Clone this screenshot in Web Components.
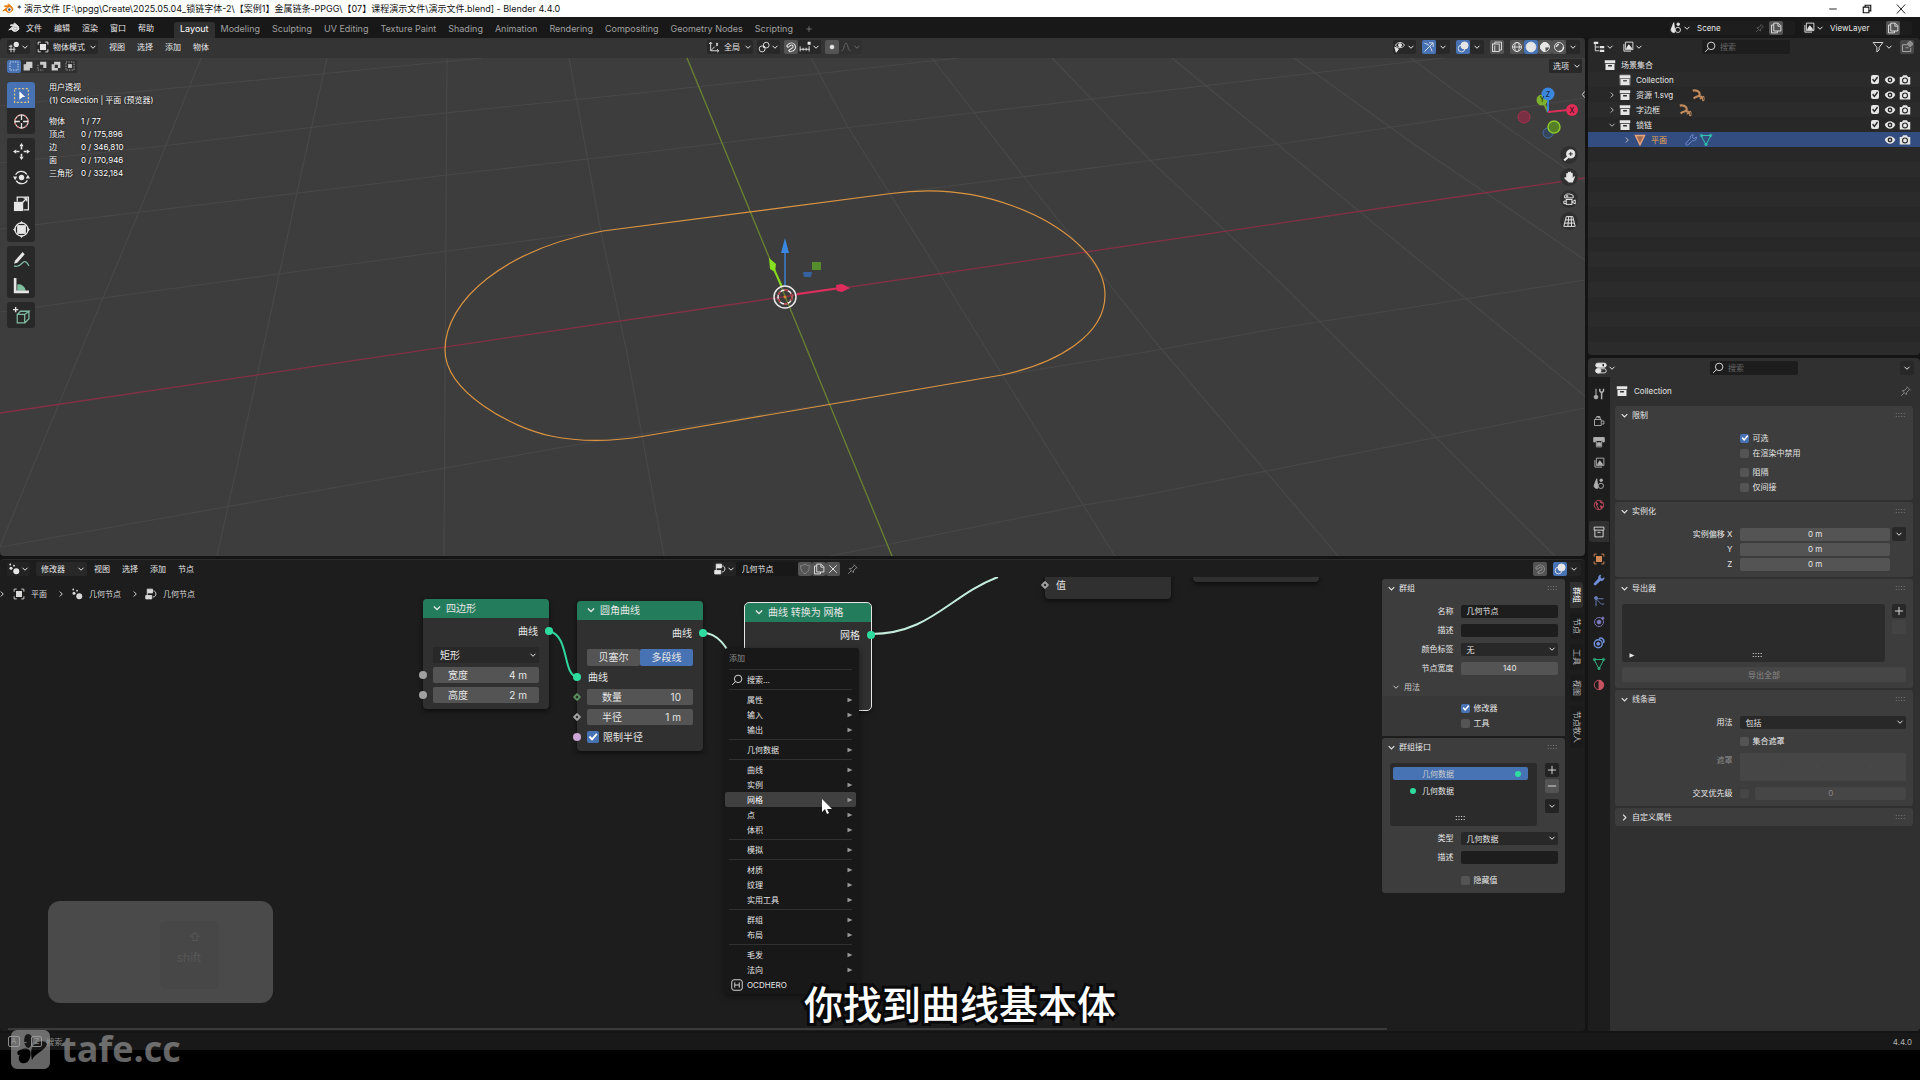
<!DOCTYPE html>
<html lang="zh-CN">
<head>
<meta charset="utf-8">
<title>演示文件.blend - Blender 4.4.0</title>
<style>
    body {
        margin: 0;
        background: #000;
        color: #e6e6e6;
        font: 8px/14px Inter, "Noto Sans CJK SC", sans-serif;
    }
</style>
</head>
<body>
<blender-app></blender-app>

<script>
const ICONS = {
    'blender': '<path d="M1 10.500 8 5H3.500V3.800H9L7.500 2.500 9 1.500l5 4.500a5 4.500 0 1 1-9 4H3z" fill="currentColor"/><circle cx="9.800" cy="8.800" r="2.800" fill="#181818"/><circle cx="9.800" cy="8.800" r="1.600" fill="currentColor"/>',
    'blender-color': '<path d="M1 10.500 8 5H3.500V3.800H9L7.500 2.500 9 1.500l5 4.500a5 4.500 0 1 1-9 4H3z" fill="#e87d0d" stroke="#e87d0d"/><circle cx="9.800" cy="8.800" r="3" fill="#fff" stroke="none"/><circle cx="9.800" cy="8.800" r="1.700" fill="#265787" stroke="none"/>',
    'down': '<path d="m3 5.500 5 5 5-5" stroke-width="2"/>',
    'right': '<path d="m5.500 3 5 5-5 5" stroke-width="2"/>',
    'left': '<path d="m10.500 1-5 7 5 7" stroke-width="2"/>',
    'play': '<path d="M3 3.500 13 8 3 12.500z" fill="currentColor" stroke="none"/>',
    'view3d': '<path d="M1 11h9M4 5v10M1 7h5M8 8v7"/><circle cx="11" cy="4.500" r="3.500" fill="currentColor" stroke="none"/>',
    'object': '<path d="M1.500 5V1.500H5M11 1.500h3.500V5M14.500 11v3.500H11M5 14.500H1.500V11"/><rect x="4" y="4" width="8" height="8" fill="currentColor" stroke="none"/>',
    'axes': '<path d="M3.500 2v11H14M1.500 4l2-2.500 2 2.500M12 11l2.500 2-2.500 2M3.500 13 9 7.500M11 2.500l2 4M13 2.500l-2 4"/>',
    'pivot': '<circle cx="5.500" cy="10.500" r="4"/><circle cx="11" cy="5.500" r="3.800"/><circle cx="8" cy="8" r="1" fill="currentColor"/>',
    'magnet': '<path d="M2 6.500 6 3.200A5.200 5.200 0 1 1 11 13l-4.500 1.500M2 6.500l2 2 4-3c2-1 4 2 2 3.500l-5 3.500 1.500 2" stroke-width="1.400"/>',
    'snap': '<path d="M1.500 7v7M5.500 9v4M9.500 9v4M13.500 7v7M1 11h13"/><rect x="11.500" y="1" width="4" height="4" fill="currentColor" stroke="none"/>',
    'dot': '<circle cx="8" cy="8" r="2.500" fill="currentColor"/>',
    'falloff': '<path d="M2 13c4 0 3-10 6-10s2 10 6 10"/>',
    'eye-cursor': '<path d="M2 5.500C4.500 1 11.500 1 14 5.500 11.500 10 4.500 10 2 5.500z"/><circle cx="8" cy="5.500" r="2" fill="currentColor"/><path d="m1 8 5 2.500-3 4.500z" fill="currentColor"/>',
    'gizmo': '<path d="M2 14 13 3M8 2.500h5.500V8M2 3c5 1 9 5 10 11"/>',
    'overlay': '<circle cx="10" cy="6" r="4.800" fill="currentColor"/><circle cx="6" cy="10" r="4.500"/>',
    'xray': '<rect x="2" y="4" width="9" height="10"/><path d="M5 4V1.500h9V12h-3M5 6v8" />',
    'wire': '<circle cx="8" cy="8" r="6"/><ellipse cx="8" cy="8" rx="3" ry="6"/><path d="M2 8h12"/>',
    'solid': '<circle cx="8" cy="8" r="6.500" fill="currentColor"/>',
    'matprev': '<circle cx="8" cy="8" r="6"/><path d="M8 2a6 6 0 0 0 0 12V8h5A6 6 0 0 0 8 2z" fill="currentColor"/>',
    'rendered': '<circle cx="8" cy="8" r="6"/><path d="M4.500 8A4 4 0 0 1 8 4.500" stroke-width="2"/><path d="M14 8a6 6 0 0 1-6 6" stroke-width="2"/>',
    'sel-new': '<rect x="1.500" y="1.500" width="13" height="13" stroke-dasharray="2 2"/>',
    'sel-add': '<path d="M5 1h10v10h-4v4H1V5h4z" fill="currentColor" stroke="none"/>',
    'sel-sub': '<path d="M5 1h10v10h-5V6H5z" fill="currentColor" stroke="none"/><path d="M1.500 6v8.500H10" stroke-dasharray="2 2"/>',
    'sel-inv': '<path fill-rule="evenodd" d="M5 1h10v10h-4v4H1V5h4zM6 6v5h5V6z" fill="currentColor" stroke="none"/>',
    'sel-and': '<rect x="5" y="5" width="6" height="6" fill="currentColor" stroke="none"/><rect x="1.500" y="1.500" width="13" height="13" stroke-dasharray="2 2"/>',
    't-select': '<rect x="1.500" y="1.500" width="13" height="13" stroke="#d9c28a" stroke-dasharray="2 1.500"/><path d="m6 4 5.500 5.500H9L6 12z" fill="#fff" stroke="none"/>',
    't-cursor': '<circle cx="8" cy="8" r="6.200"/><circle cx="8" cy="8" r="6.200" stroke="#c66" stroke-dasharray="2 2"/><path d="M8 1.500v5M8 9.500v5M1.500 8h5M9.500 8h5"/>',
    't-move': '<path d="M8 0 6 3h4zM8 16l-2-3h4zM0 8l3-2v4zM16 8l-3-2v4z" fill="currentColor" stroke="none"/><path d="M8 3v3M8 10v3M3 8h3M10 8h3" stroke-width="1.500"/>',
    't-rotate': '<circle cx="8" cy="8" r="2" fill="currentColor"/><path d="M2.500 5.500A6 6 0 0 1 13 5M13.500 10.500A6 6 0 0 1 3 11"/><path d="M0 7h4l-2 3.500zM16 9h-4l2-3.500z" fill="currentColor" stroke="none"/>',
    't-scale': '<path d="M4 6V2h10.500v12H10"/><path d="m9 7 4-4M10 3h3v3"/><rect x="1.500" y="7" width="7.500" height="7.500" fill="currentColor"/>',
    't-transform': '<circle cx="8" cy="8" r="6.200"/><rect x="4.500" y="4.500" width="7" height="7" fill="currentColor"/><path d="M8 0 6 2.500h4zM8 16l-2-2.500h4zM0 8l2.500-2v4zM16 8l-2.500-2v4z" fill="currentColor" stroke="none"/>',
    't-annotate': '<path d="m2 9 7-8 2 2-7 8-3 1z" fill="currentColor" stroke="none"/><path d="M1 14c4 2 6-1 8-3s4-1 6 3" stroke="#7fb8a0"/>',
    't-measure': '<path d="M4 13V7a7 7 0 0 1 8 6z" fill="#7fc0a0" stroke="none"/><path d="M2 1v13h13" stroke-width="2.500"/>',
    't-cube': '<path d="M4 7h7v8H4zM4 7l3-3h8l-4 3M15 4v7l-4 4" stroke="#7fb8a0"/><path d="M2.500 0v5M0 2.500h5" stroke-width="1.300"/>',
    'zoom': '<circle cx="9.500" cy="6" r="5" fill="currentColor"/><path d="m6 10-4.500 4" stroke-width="2.500"/><path d="M9.500 3.500v5M7 6h5" stroke="#303030"/>',
    'hand': '<path d="M4 8V3.500a1 1 0 0 1 2 0V2a1 1 0 0 1 2 0v-.5a1 1 0 0 1 2 0V3a1 1 0 0 1 2 0v6l1-2c1-1 2 0 1.500 1L12 14H7L2 9.500C1 8 2.500 7 4 8z" fill="currentColor" stroke="none"/>',
    'camview': '<path d="M2 6V3.500C4 0 9 1 12.500 3v3z"/><circle cx="5" cy="4" r="1"/><rect x="4" y="8" width="7" height="6"/><path d="m11 11 4-2.500v5zM4 10H1v3h3"/>',
    'persp': '<path d="M4 2h8l3 12H1zM3 6h10M2 10h12M7 2 6 14M10 2l.5 12"/>',
    'scene': '<path d="M5 1 1.500 10a3.500 3.500 0 0 0 5 3.500z" fill="currentColor"/><circle cx="10.500" cy="10.500" r="3.500"/><circle cx="11" cy="3" r="1.700" fill="currentColor"/>',
    'pin': '<path d="m9 2 5 5M10 3 6.500 7 3 7.500 8.500 13l.5-3.500L13 6M5.500 10.500 1.500 14.500"/>',
    'copy': '<path d="M5 1.500h6l3.500 3.500v7H5zM10.500 2v3.500H14"/><path d="M5 4H2v10.500h8V12"/>',
    'image': '<path d="M4.500 1.500h10v10h-10z"/><path d="m6 10 3-5 4 5z" fill="currentColor"/><path d="M2.500 4v9.500H12"/>',
    'outliner': '<path d="M3 3v10h5M3 8h5" /><path d="M1 1h6v3H1zM9 6.500h6v3H9zM9 11.500h6v3H9z" fill="currentColor" stroke="none"/>',
    'search': '<circle cx="9.500" cy="6.500" r="5"/><path d="m6 10-4.500 4.500"/>',
    'filter': '<path d="M1.500 2h13l-5 6.500V12l-3 2.500v-6z"/>',
    'newcol': '<path d="M2 5h6M2 5v9h11V9M6 9h4" /><circle cx="12" cy="4" r="3"/><path d="M12 0v8M8 4h8"/>',
    'collection': '<path d="M1 1.500h14v4H1zM2 6.500h12v8H2zM5.500 8v2h5V8z" fill-rule="evenodd" fill="currentColor" stroke="none"/>',
    'collection-line': '<path d="M1.500 1.500h13v4h-13zM2.500 5.500v9h11v-9M6 8.500h4"/>',
    'curve': '<path d="M2 3c4-1 8 1 8 4S6 9 3 12" stroke-width="2.500"/><path d="M9 10c4-2 5 2 1 2" stroke-width="2"/><ellipse cx="14" cy="12" rx="1" ry="2.500"/>',
    'mesh': '<path d="M1.500 2h13L8 14.500z"/><circle cx="2" cy="2" r="1.500"/><circle cx="14" cy="2" r="1.500"/><circle cx="8" cy="14" r="1.500"/>',
    'mesh-fill': '<path d="M2 2h12L8 14.500z" fill="#a06a50" stroke="#e8a27c" stroke-width="2"/>',
    'wrench': '<path d="M11 1a4 4 0 0 0-4 5L1.500 12a1.500 1.500 0 0 0 2.500 2.500L10 9a4 4 0 0 0 5-5l-2.500 2-2-.5-.5-2z" fill="currentColor" stroke="none"/>',
    'wrench-line': '<path d="M11 1a4 4 0 0 0-4 5L1.500 12a1.500 1.500 0 0 0 2.500 2.500L10 9a4 4 0 0 0 5-5l-2.500 2-2-.5-.5-2z"/>',
    'props': '<rect x="1" y="1.500" width="14" height="5.500" rx="2.700" fill="currentColor"/><rect x="1" y="9" width="14" height="5.500" rx="2.700"/><path d="M10 4.200h2" stroke="#222" stroke-width="3"/><rect x="1" y="9" width="7" height="5.500" rx="2.700" fill="currentColor"/>',
    'tool': '<path d="M4 1v8" stroke-width="1.500"/><circle cx="4" cy="12" r="2.500" fill="currentColor"/><path d="M9 1v3l2.500 2.500L14 4V1M11.500 6v9" stroke-width="2"/>',
    'render': '<path d="M2 6h9v8H2zM3 6l2-4h4l1 4M12 8h2.500v4H12"/><path d="M6 3h3" stroke-width="2"/>',
    'output': '<path d="M1 2h14v6h-2V6H3v2H1z" fill="currentColor"/><path d="M4.500 7v7.500h7V7"/><path d="M6 9h4v4H6z" fill="currentColor"/>',
    'world': '<circle cx="8" cy="8" r="6.300"/><path d="M3 4.500c3 0 4 2 2.500 3.500S8 11 7 14M10 2.500C8 5 12 5 13.500 6M10 9l3 1-2 3z" fill="currentColor"/>',
    'particles': '<path d="M4 13V5h8M4 5l8 8"/><circle cx="4" cy="4" r="2" fill="currentColor"/><path d="M11 5h3M12 12h3M4 12v3"/>',
    'physics': '<circle cx="8" cy="8" r="6"/><circle cx="8" cy="8" r="2.500" fill="currentColor"/><circle cx="13" cy="3" r="1.500" fill="currentColor"/>',
    'constraint': '<circle cx="7" cy="9" r="5.300" stroke-width="2"/><circle cx="7" cy="9" r="2" fill="currentColor"/><path d="M8 2c4-2 8 2 6 6" stroke-width="2"/>',
    'material': '<circle cx="8" cy="8" r="6.300"/><path d="M8 2a6 6 0 0 1 6 6H8zM8 8v6A6 6 0 0 0 14 9z" fill="currentColor"/>',
    'geonodes': '<circle cx="11" cy="11" r="4" fill="currentColor" stroke="none"/><circle cx="4" cy="7" r="2" fill="currentColor" stroke="none"/><circle cx="3" cy="2" r="1.200" fill="currentColor" stroke="none"/><circle cx="8" cy="3.500" r="1.200" fill="currentColor" stroke="none"/>',
    'nodetree': '<path d="M3 1.500h7v5H3zM1 10h8v4.500H1z" fill="currentColor"/><path d="M11 4c3 0 3.500 2 3.500 4s-1 4-4 4M3 6.500V10"/>',
    'shield': '<path d="M8 1.500c2 1.500 4 2 6 2 0 6-2 9-6 11-4-2-6-5-6-11 2 0 4-.5 6-2z"/>',
    'close': '<path d="m3 3 10 10M13 3 3 13"/>',
    'plus': '<path d="M8 2.500v11M2.500 8h11"/>',
    'minus': '<path d="M2.500 8h11"/>',
    'grip': '<path d="M1 6h14M1 10h14" stroke-dasharray="1.500 2"/>',
    'eye': '<path d="M1 8c3-6.500 11-6.500 14 0-3 6.500-11 6.500-14 0z" fill="currentColor" stroke="none"/><circle cx="8" cy="8" r="3.200" fill="#282828" stroke="none"/><circle cx="8" cy="8" r="1.400" fill="currentColor" stroke="none"/>',
    'camera': '<path d="M1 4h3l1.500-2.500h5L12 4h3v10H1z" fill="currentColor" stroke="none"/><circle cx="8" cy="8.500" r="4" fill="#282828" stroke="none"/><circle cx="8" cy="8.500" r="2.500" fill="currentColor" stroke="none"/>',
    'hero': '<rect x="1" y="1" width="14" height="14" rx="3"/><path d="M5 4.500v7M11 4.500v7M5 8h6"/>',
    'win-min': '<path d="M3 8h10"/>',
    'win-max': '<path d="M3 5.500h7.500V13H3zM5.500 5.500V3H13v7.500h-2.500" stroke-width="1.500"/>',
    'win-close': '<path d="m2.500 2 11 12M13.500 2l-11 12"/>'
};

const BASE = `
    * { box-sizing: border-box; }
    button, input, select {
        font: inherit; color: inherit; border: 0; padding: 0; margin: 0;
        background: none; border-radius: 2px; min-width: 0;
    }
    select { appearance: none; }
    input[type=checkbox] {
        appearance: none; width: 9px; height: 9px; flex: none;
        background: #545454; display: block;
    }
    input[type=checkbox]:checked { background: #4772b3; }
    input[type=checkbox]:checked::before {
        content: ""; display: block; width: 100%; height: 100%; background: #fff;
        clip-path: polygon(14% 52%, 26% 40%, 42% 58%, 76% 18%, 88% 30%, 42% 82%);
    }
`;

class UiElement extends HTMLElement {
    constructor() {
        super();
        this.attachShadow({ mode: 'open' });
    }

    connectedCallback() {
        this.shadowRoot.innerHTML = `<style>${BASE}${this.styles()}</style>${this.view()}`;
    }

    attr(name, fallback = '') {
        return this.getAttribute(name) || fallback;
    }

    styles() { return ''; }
    view() { return '<slot></slot>'; }
}

class UiIcon extends UiElement {
    styles() {
        return `
            :host { display: block; flex: none; width: 12px; height: 12px; }
            svg { display: block; width: 100%; height: 100%; overflow: visible; }
        `;
    }
    view() {
        return `<svg viewBox="0 0 16 16" fill="none" stroke="currentColor" stroke-width="1.200" aria-hidden="true">${ICONS[this.attr('name')] || ''}</svg>`;
    }
}
customElements.define('ui-icon', UiIcon);

// Small header button: icon, optional text, optional drop arrow.
class UiButton extends UiElement {
    styles() {
        return `
            :host { display: block; flex: none; }
            button {
                display: flex; align-items: center; gap: 1px;
                height: 14px; min-width: 14px; padding: 0 1px;
                justify-content: center; background: var(--btn, #282828); white-space: nowrap;
            }
            :host([kind=on]) button { background: #4772b3; }
            :host([kind=lit]) button { background: #545454; }
            :host([kind=flat]) button { background: none; }
            :host([dim]) { color: #888; }
            span { margin: 0 3px; }
            .drop { width: 8px; height: 8px; }
        `;
    }
    view() {
        const icon = this.attr('icon');
        const text = this.attr('text');
        return `<button type="button" aria-label="${this.attr('label', text || icon)}">
            ${icon ? `<ui-icon name="${icon}"></ui-icon>` : ''}
            ${text ? `<span>${text}</span>` : ''}
            ${this.hasAttribute('drop') ? '<ui-icon class="drop" name="down"></ui-icon>' : ''}
        </button>`;
    }
}
customElements.define('ui-button', UiButton);

class UiMenus extends UiElement {
    styles() {
        return `
            :host { display: flex; gap: 12px; }
            button { height: 14px; white-space: nowrap; }
        `;
    }
    view() {
        return this.attr('items').split(',').map((t) => `<button type="button">${t}</button>`).join('');
    }
}
customElements.define('ui-menus', UiMenus);

class UiSearch extends UiElement {
    styles() {
        return `
            :host { display: flex; align-items: center; gap: 4px; width: 88px; height: 14px; padding: 0 2px; background: #1d1d1d; border-radius: 2px; }
            input { flex: 1; height: 14px; }
            input::placeholder { color: #666; opacity: 1; }
        `;
    }
    view() {
        return '<ui-icon name="search"></ui-icon><input type="text" placeholder="搜索" aria-label="搜索">';
    }
}
customElements.define('ui-search', UiSearch);

class EditorHeader extends UiElement {
    styles() {
        return `
            :host { display: grid; grid-template-columns: 1fr auto 1fr; align-items: center; flex: none; }
            div { display: flex; align-items: center; gap: 6px; }
            .end { justify-content: flex-end; }
        `;
    }
    view() {
        return `
            <div><slot name="left"></slot></div>
            <div><slot name="center"></slot></div>
            <div class="end"><slot name="right"></slot></div>
        `;
    }
}
customElements.define('editor-header', EditorHeader);

class UiPanel extends UiElement {
    styles() {
        return `
            :host { display: block; background: #3d3d3d; border-radius: 3px; }
            header { display: flex; align-items: center; height: 18px; padding: 0 6px 0 5px; }
            button { display: flex; align-items: center; gap: 3px; flex: 1; }
            button ui-icon { width: 9px; height: 9px; }
            .grip { color: #777; }
            section { display: flex; flex-direction: column; gap: 5px; padding: 7px 7px 6px; }
            :host([closed]) section { display: none; }
        `;
    }
    view() {
        const closed = this.hasAttribute('closed');
        return `
            <header>
                <button type="button"><ui-icon name="${closed ? 'right' : 'down'}"></ui-icon>${this.attr('heading')}</button>
                <ui-icon class="grip" name="grip"></ui-icon>
            </header>
            <section><slot></slot></section>
        `;
    }
}
customElements.define('ui-panel', UiPanel);

// One labelled property: kind is text, number, select or check.
class UiProp extends UiElement {
    styles() {
        return `
            :host { display: grid; grid-template-columns: minmax(0, 2fr) minmax(0, 3fr); gap: 8px; height: 14px; align-items: center; }
            .name { text-align: right; white-space: nowrap; }
            .cell { display: flex; gap: 2px; align-items: center; height: 14px; position: relative; }
            .field { flex: 1; height: 13px; width: 100%; background: #1d1d1d; padding: 0 5px; }
            select.field { background: #282828; }
            .number { background: #545454; text-align: center; }
            .arrow { position: absolute; right: 2px; top: 3px; width: 8px; height: 8px; pointer-events: none; }
            .check { display: flex; align-items: center; gap: 3px; white-space: nowrap; }
            :host([dim]) .number { background: #464646; color: #888; }
        `;
    }
    view() {
        const kind = this.attr('kind', 'text');
        const label = this.attr('label');
        const value = this.attr('value');
        if (kind === 'check') {
            return `<span></span><label class="check"><input type="checkbox"${this.hasAttribute('checked') ? ' checked' : ''}>${label}</label>`;
        }
        let control = `<input id="c" class="field ${kind}" type="text" value="${value}">`;
        if (kind === 'select') {
            control = `<select id="c" class="field"><option>${value}</option></select><ui-icon class="arrow" name="down"></ui-icon>`;
        }
        return `<label class="name" for="c">${label}</label><div class="cell"><slot name="before"></slot>${control}<slot></slot></div>`;
    }
}
customElements.define('ui-prop', UiProp);

class TitleBar extends UiElement {
    styles() {
        return `
            :host {
                display: flex; align-items: center; height: 17px; padding: 0 13px 0 2px; gap: 3px;
                background: #fff; color: #111; font-size: 9px; line-height: 17px;
            }
            .name { flex: 1; white-space: nowrap; }
            nav { display: flex; gap: 22px; }
            button { width: 12px; height: 12px; }
        `;
    }
    view() {
        return `
            <ui-icon name="blender-color"></ui-icon>
            <span class="name">* 演示文件 [F:\\ppgg\\Create\\2025.05.04_锁链字体-2\\【案例1】金属链条-PPGG\\【07】课程演示文件\\演示文件.blend] - Blender 4.4.0</span>
            <nav>
                <button type="button" aria-label="最小化"><ui-icon name="win-min"></ui-icon></button>
                <button type="button" aria-label="还原"><ui-icon name="win-max"></ui-icon></button>
                <button type="button" aria-label="关闭"><ui-icon name="win-close"></ui-icon></button>
            </nav>
        `;
    }
}
customElements.define('title-bar', TitleBar);

class TopBar extends UiElement {
    styles() {
        return `
            :host { display: flex; align-items: center; height: 21px; padding: 0 8px; background: #181818; --btn: #1d1d1d; }
            ui-menus { margin: 0 20px 0 6px; }
            nav { display: flex; align-self: flex-end; flex: 1; color: #a0a0a0; font-size: 9px; }
            nav button { height: 16px; padding: 0 6px 2px; border-radius: 3px 3px 0 0; white-space: nowrap; }
            nav .on { background: #303030; color: #fff; }
            nav ui-icon { width: 8px; height: 8px; }
            .pick { display: flex; align-items: center; background: #1d1d1d; margin-left: 7px; border-radius: 2px; }
            .pick input { width: 58px; height: 14px; }
            .view input { width: 56px; }
            .pick ui-button:first-child { margin-right: 5px; }
            .pick > ui-icon { color: #666; width: 10px; height: 10px; margin-right: 4px; }
            .pad { width: 12px; }
        `;
    }
    view() {
        const tabs = ['Layout', 'Modeling', 'Sculpting', 'UV Editing', 'Texture Paint', 'Shading', 'Animation', 'Rendering', 'Compositing', 'Geometry Nodes', 'Scripting'];
        return `
            <ui-icon name="blender"></ui-icon>
            <ui-menus items="文件,编辑,渲染,窗口,帮助"></ui-menus>
            <nav>
                ${tabs.map((t, i) => `<button type="button"${i ? '' : ' class="on"'}>${t}</button>`).join('')}
                <button type="button" aria-label="添加工作区"><ui-icon name="plus"></ui-icon></button>
            </nav>
            <div class="pick">
                <ui-button icon="scene" drop></ui-button>
                <input type="text" value="Scene" aria-label="场景">
                <ui-icon name="pin"></ui-icon>
                <ui-button icon="copy" kind="lit"></ui-button>
                <span class="pad"></span>
            </div>
            <div class="pick view">
                <ui-button icon="image" drop></ui-button>
                <input type="text" value="ViewLayer" aria-label="视图层">
                <ui-button icon="copy" kind="lit"></ui-button>
                <span class="pad"></span>
            </div>
        `;
    }
}
customElements.define('top-bar', TopBar);

class ToolShelf extends UiElement {
    styles() {
        return `
            :host { display: flex; flex-direction: column; gap: 4px; width: 28px; }
            div { border-radius: 3px; overflow: hidden; background: #282828; }
            button { display: flex; width: 28px; height: 26px; align-items: center; justify-content: center; border-radius: 0; }
            button.on { background: #4772b3; }
            ui-icon { width: 17px; height: 17px; }
        `;
    }
    view() {
        const groups = [['select', 'cursor'], ['move', 'rotate', 'scale', 'transform'], ['annotate', 'measure'], ['cube']];
        return groups.map((g) => `<div>${g.map((t) =>
            `<button type="button" aria-label="${t}"${t === 'select' ? ' class="on"' : ''}><ui-icon name="t-${t}"></ui-icon></button>`).join('')}</div>`).join('');
    }
}
customElements.define('tool-shelf', ToolShelf);

class NavGizmo extends UiElement {
    styles() {
        return `
            :host { display: flex; flex-direction: column; align-items: flex-end; gap: 4px; }
            svg { width: 64px; height: 64px; display: block; margin-bottom: -2px; font: 7px Inter, sans-serif; }
            button { width: 18px; height: 18px; border-radius: 9px; background: #303030; display: grid; place-items: center; margin-right: 2px; }
            ui-icon { width: 13px; height: 13px; }
        `;
    }
    view() {
        return `
            <svg viewBox="-32 -32 64 64" text-anchor="middle">
                <circle cx="0" cy="21" r="5" fill="#35465c" stroke="#3f6ea8"/>
                <circle cx="-24" cy="5" r="6" fill="#7a2f42" stroke="#a8304c"/>
                <path d="M0 0-5-11" stroke="#7aa52a" stroke-width="2"/>
                <path d="M0 0v-16" stroke="#3b83d8" stroke-width="2"/>
                <path d="m0 0 20-2" stroke="#d8305a" stroke-width="2"/>
                <circle cx="6" cy="15" r="6" fill="#547f27" stroke="#8bc72c" stroke-width="1.500"/>
                <circle cx="-6" cy="-12" r="5.500" fill="#7db02b"/>
                <circle cx="0" cy="-18" r="6.500" fill="#3b87e0"/>
                <circle cx="24" cy="-2" r="6" fill="#e02c57"/>
                <text x="-6" y="-10" fill="#111">Y</text>
                <text x="0" y="-15" fill="#111">Z</text>
                <text x="24" y="1" fill="#111">X</text>
            </svg>
            ${['zoom', 'hand', 'camview', 'persp'].map((n) => `<button type="button" aria-label="${n}"><ui-icon name="${n}"></ui-icon></button>`).join('')}
        `;
    }
}
customElements.define('nav-gizmo', NavGizmo);

class View3d extends UiElement {
    styles() {
        return `
            :host { display: flex; flex-direction: column; position: relative; overflow: hidden; background: #3d3d3d; border-radius: 4px; }
            .scene { position: absolute; inset: 0; width: 100%; height: 100%; }
            editor-header { position: relative; height: 20px; padding: 0 5px 3px 7px; background: rgba(48, 48, 48, .7); }
            .join { display: flex; }
            .mid { padding-right: 18px; display: flex; gap: 4px; }
            .sub { position: relative; display: flex; justify-content: space-between; align-items: center; height: 16px; padding: 0 3px 0 7px; }
            .modes { display: flex; background: #303030; }
            .modes button { width: 14px; height: 13px; display: grid; place-items: center; color: #ccc; }
            .modes .on { background: #4772b3; color: #fff; }
            .modes ui-icon { width: 10px; height: 10px; }
            .body { position: relative; display: flex; padding-top: 6px; }
            tool-shelf { margin: 2px 14px 0 7px; }
            .info { flex: 1; padding-top: 1px; line-height: 13px; color: #fff; text-shadow: 0 0 2px #000; }
            dl { display: grid; grid-template-columns: 32px auto; margin: 8px 0 0; }
            dd { margin: 0; }
            .side { width: 5px; height: 14px; margin-top: 7px; display: grid; place-items: center; }
            .side ui-icon { width: 7px; height: 7px; }
        `;
    }
    view() {
        const stats = [['物体', '1 / 77'], ['顶点', '0 / 175,896'], ['边', '0 / 346,810'], ['面', '0 / 170,946'], ['三角形', '0 / 332,184']];
        return `
            <svg class="scene" viewBox="0 38 1585 518" preserveAspectRatio="xMidYMid slice" fill="none">
                <g stroke="#484848" stroke-width="1.200">
                    <path d="M0 106 82 97 310 75 482 58M0 163 155 147 347 123 640 93 815 74 958 58M0 229 447 175 640 153 844 128 1280 77 1443 58M0 312 286 273 447 251 942 187 1280 144 1585 98M0 547 400 476 575 445 1140 353 1280 328 1585 280M830 556 1084 505 1140 496 1585 408"/>
                    <path d="M201 58 141 207 80 353-4 556M327 58 296 197 261 358 217 556M447 58 444 556M569 58 600 227 627 353 664 556M811 58 848 127 942 277 993 360 1115 556M932 58 1024 177 1158 345 1338 556M1052 58 1150 160 1288 290 1555 556M1172 58 1288 153 1464 297 1585 396M1294 58 1415 145 1585 260M1411 58 1451 88 1585 182"/>
                </g>
                <path d="M0 413 1585 178" stroke="#853046" stroke-width="1.300"/>
                <path d="M687 58 892 556" stroke="#6b8330" stroke-width="1.300"/>
                <path d="M603 231 891 193.500C930 188 973 191 1013 206 1060 223 1105 257 1105 295 1105 335 1058 363 1002 375L645 436C605 443 575 441 551 436 512 428 445 392 445 350 445 300 505 249 603 231z" stroke="#dc9440" stroke-width="1.200"/>
                <path d="M785 286v-35" stroke="#3b7fd0" stroke-width="1.500"/>
                <path d="m785 238-4 15h8z" fill="#3b87e0"/>
                <path d="m782 287-9-20" stroke="#86d81f" stroke-width="2"/>
                <path d="m769 258 7 6-1 8-5-3z" fill="#86e01f"/>
                <path d="m797 294 43-6" stroke="#d9305c" stroke-width="2"/>
                <path d="m836 285 6-1 8 4-8 4-5-1z" fill="#e02c5c"/>
                <path d="M812 262h9v8h-9z" fill="#558c2c"/>
                <path d="M803 272h9l-1 5h-7z" fill="#35619e"/>
                <circle cx="785" cy="297" r="11" stroke="#e8e8e8" stroke-width="1.500"/>
                <circle cx="785" cy="297" r="7" stroke="#eee" stroke-width="1.500"/>
                <circle cx="785" cy="297" r="7" stroke="#a33" stroke-width="1.500" stroke-dasharray="4 4"/>
                <circle cx="785" cy="297" r="1.500" fill="#d98a30"/>
            </svg>
            <editor-header>
                <ui-button slot="left" icon="view3d" drop></ui-button>
                <ui-button slot="left" icon="object" text="物体模式" drop></ui-button>
                <ui-menus slot="left" items="视图,选择,添加,物体" style="margin-left:5px"></ui-menus>
                <div slot="center" class="mid">
                    <ui-button icon="axes" text="全局" drop></ui-button>
                    <ui-button icon="pivot" drop></ui-button>
                    <span class="join"><ui-button icon="magnet" kind="lit"></ui-button><ui-button icon="snap" drop></ui-button></span>
                    <span class="join"><ui-button icon="dot" kind="lit"></ui-button><ui-button icon="falloff" drop style="opacity:.3"></ui-button></span>
                </div>
                <ui-button slot="right" icon="eye-cursor" drop></ui-button>
                <span slot="right" class="join"><ui-button icon="gizmo" kind="on"></ui-button><ui-button label="控件" drop></ui-button></span>
                <span slot="right" class="join"><ui-button icon="overlay" kind="on"></ui-button><ui-button label="叠加层" drop></ui-button></span>
                <ui-button slot="right" icon="xray" kind="lit"></ui-button>
                <span slot="right" class="join">
                    <ui-button icon="wire" kind="lit"></ui-button><ui-button icon="solid" kind="on"></ui-button>
                    <ui-button icon="matprev" kind="lit"></ui-button><ui-button icon="rendered" kind="lit"></ui-button>
                    <ui-button label="着色" drop></ui-button>
                </span>
            </editor-header>
            <div class="sub">
                <div class="modes">
                    ${['new', 'add', 'sub', 'inv', 'and'].map((m) => `<button type="button" aria-label="${m}"${m === 'new' ? ' class="on"' : ''}><ui-icon name="sel-${m}"></ui-icon></button>`).join('')}
                </div>
                <ui-button text="选项" drop></ui-button>
            </div>
            <div class="body">
                <tool-shelf></tool-shelf>
                <div class="info">
                    <div>用户透视</div>
                    <div>(1) Collection | 平面 (预览器)</div>
                    <dl>${stats.map(([k, v]) => `<dt>${k}</dt><dd>${v}</dd>`).join('')}</dl>
                </div>
                <nav-gizmo></nav-gizmo>
                <button class="side" type="button" aria-label="侧栏"><ui-icon name="left"></ui-icon></button>
            </div>
        `;
    }
}
customElements.define('view-3d', View3d);

class OutlinerRow extends UiElement {
    styles() {
        const depth = Number(this.attr('depth', '0'));
        return `
            :host { display: flex; align-items: center; height: 15px; padding: 0 9px 0 ${1 + depth * 15}px; }
            :host([selected]) { background: #334d80; color: #f0a848; }
            .fold { width: 15px; display: grid; place-items: center; color: #bbb; }
            .fold ui-icon { width: 8px; height: 8px; }
            .kind { color: #e6e6e6; }
            :host([active]) .kind { background: #555; border-radius: 2px; }
            .name { margin: 0 18px 0 5px; }
            .extra { color: #c08a5c; width: 14px; height: 14px; }
            .mod { color: #6f8fd0; }
            .mesh { color: #2fd5b0; margin-left: 3px; }
            .end { margin-left: auto; display: flex; gap: 3px; align-items: center; color: #e6e6e6; }
            .end input { margin: 0 2px; width: 8px; background: #e6e6e6; }
            .end input:checked { background: #e6e6e6; }
            .end input:checked::before { background: #222; }
        `;
    }
    view() {
        const fold = this.attr('fold');
        const extra = this.attr('extra');
        const root = this.attr('depth', '0') === '0';
        const selected = this.hasAttribute('selected');
        return `
            <span class="fold">${fold ? `<ui-icon name="${fold}"></ui-icon>` : ''}</span>
            <ui-icon class="kind" name="${this.attr('icon', 'collection')}"></ui-icon>
            <span class="name">${this.attr('name')}</span>
            ${extra ? `<ui-icon class="extra" name="${extra}"></ui-icon>` : ''}
            ${selected ? '<ui-icon class="mod" name="wrench-line"></ui-icon><ui-icon class="mesh" name="mesh"></ui-icon>' : ''}
            <span class="end">
                ${root || selected ? '' : '<input type="checkbox" checked aria-label="启用">'}
                ${root ? '' : '<ui-icon name="eye"></ui-icon><ui-icon name="camera"></ui-icon>'}
            </span>
        `;
    }
}
customElements.define('outliner-row', OutlinerRow);

class OutlinerEditor extends UiElement {
    styles() {
        return `
            :host {
                display: flex; flex-direction: column; overflow: hidden; border-radius: 4px;
                background: repeating-linear-gradient(#282828 0 15px, #2b2b2b 15px 30px) 0 19px;
            }
            editor-header { height: 19px; padding: 0 6px 2px 4px; background: #282828; }
            ui-search { margin-right: 14px; }
        `;
    }
    view() {
        return `
            <editor-header>
                <ui-button slot="left" icon="outliner" drop></ui-button>
                <ui-button slot="left" icon="image" drop></ui-button>
                <ui-search slot="center"></ui-search>
                <ui-button slot="right" icon="filter" kind="flat" drop></ui-button>
                <ui-button slot="right" icon="newcol" kind="lit" style="opacity:.7"></ui-button>
            </editor-header>
            <outliner-row name="场景集合"></outliner-row>
            <outliner-row depth="1" name="Collection" active></outliner-row>
            <outliner-row depth="1" name="资源 1.svg" fold="right" extra="curve"></outliner-row>
            <outliner-row depth="1" name="字边框" fold="right" extra="curve"></outliner-row>
            <outliner-row depth="1" name="锁链" fold="down"></outliner-row>
            <outliner-row depth="2" name="平面" fold="right" icon="mesh-fill" selected></outliner-row>
        `;
    }
}
customElements.define('outliner-editor', OutlinerEditor);

class PropertiesEditor extends UiElement {
    styles() {
        return `
            :host { display: flex; flex-direction: column; overflow: hidden; border-radius: 4px; background: #303030; }
            editor-header { height: 19px; padding: 0 6px; }
            .body { display: flex; flex: 1; min-height: 0; }
            nav { width: 22px; background: #1d1d1d; padding-top: 6px; display: flex; flex-direction: column; gap: 6px; }
            nav div { display: flex; flex-direction: column; }
            nav button { width: 20px; height: 21px; margin-left: 1px; display: grid; place-items: center; border-radius: 3px 0 0 3px; }
            nav .on { background: #303030; }
            main { flex: 1; min-width: 0; padding: 0 7px 0 5px; display: flex; flex-direction: column; gap: 2px; }
            .path { display: flex; align-items: center; gap: 6px; height: 27px; padding: 0 1px; }
            .path ui-icon:last-child { margin-left: auto; color: #888; }
            .tight { margin-top: -4px; }
            .stack { display: flex; flex-direction: column; gap: 1px; }
            .pad { width: 14px; }
            .row { display: flex; gap: 7px; }
            .list { position: relative; flex: 1; height: 58px; background: #2b2b2b; border-radius: 3px; display: flex; align-items: flex-end; padding: 0 6px 1px; }
            .list .tri { width: 8px; height: 11px; }
            .list .grip { margin: 0 auto; }
            .col { display: flex; flex-direction: column; gap: 2px; }
            .all { height: 15px; background: #464646; color: #8c8c8c; }
            .mask { display: grid; grid-template-columns: minmax(0, 2fr) minmax(0, 3fr); gap: 8px; color: #888; text-align: right; }
            .cells { display: grid; grid-template-columns: repeat(4, 1fr); height: 28px; }
            .cells button { background: #464646; border-radius: 1px; }
        `;
    }
    view() {
        const tabs = [
            [['tool', '#b0b0b0']],
            [['render', '#b0b0b0'], ['output', '#b0b0b0'], ['image', '#b0b0b0'], ['scene', '#b0b0b0'], ['world', '#c04a5c']],
            [['collection-line', '#e0e0e0']],
            [['object', '#d08a58'], ['wrench', '#6f8fd8'], ['particles', '#6a7cb8'], ['physics', '#7f7cc0'], ['constraint', '#6f8fd8'], ['mesh', '#2fc088'], ['material', '#c85464']]
        ];
        return `
            <editor-header>
                <ui-button slot="left" icon="props" kind="flat" drop></ui-button>
                <ui-search slot="center"></ui-search>
                <ui-button slot="right" label="选项" drop></ui-button>
            </editor-header>
            <div class="body">
                <nav>
                    ${tabs.map((g) => `<div>${g.map(([n, c]) => `<button type="button" aria-label="${n}" style="color:${c}"${n === 'collection-line' ? ' class="on"' : ''}><ui-icon name="${n}"></ui-icon></button>`).join('')}</div>`).join('')}
                </nav>
                <main>
                    <div class="path"><ui-icon name="collection"></ui-icon>Collection<ui-icon name="pin"></ui-icon></div>
                    <ui-panel heading="限制">
                        <ui-prop kind="check" label="可选" checked></ui-prop>
                        <ui-prop class="tight" kind="check" label="在渲染中禁用"></ui-prop>
                        <ui-prop kind="check" label="阻隔"></ui-prop>
                        <ui-prop class="tight" kind="check" label="仅间接"></ui-prop>
                    </ui-panel>
                    <ui-panel heading="实例化">
                        <div class="stack">
                            <ui-prop kind="number" label="实例偏移 X" value="0 m"><ui-button label="更多" drop></ui-button></ui-prop>
                            <ui-prop kind="number" label="Y" value="0 m"><span class="pad"></span></ui-prop>
                            <ui-prop kind="number" label="Z" value="0 m"><span class="pad"></span></ui-prop>
                        </div>
                    </ui-panel>
                    <ui-panel heading="导出器">
                        <div class="row">
                            <div class="list"><ui-icon class="tri" name="play"></ui-icon><ui-icon class="grip" name="grip"></ui-icon></div>
                            <div class="col"><ui-button icon="plus"></ui-button><ui-button label="移除" kind="lit" style="opacity:.3"></ui-button></div>
                        </div>
                        <button type="button" class="all">导出全部</button>
                    </ui-panel>
                    <ui-panel heading="线条画">
                        <ui-prop kind="select" label="用法" value="包括"></ui-prop>
                        <ui-prop kind="check" label="集合遮罩"></ui-prop>
                        <div class="mask"><span>遮罩</span><div class="cells">${'<button type="button" aria-label="遮罩"></button>'.repeat(8)}</div></div>
                        <ui-prop dim kind="number" label="交叉优先级" value="0"><input slot="before" type="checkbox" aria-label="交叉优先级" style="margin-right:4px;background:#464646"></ui-prop>
                    </ui-panel>
                    <ui-panel heading="自定义属性" closed></ui-panel>
                </main>
            </div>
        `;
    }
}
customElements.define('properties-editor', PropertiesEditor);

class GeoNode extends UiElement {
    styles() {
        return `
            :host { display: block; position: absolute; width: 126px; background: #303030; border-radius: 4px; box-shadow: 0 2px 5px rgba(0, 0, 0, .6); font-size: 10px; }
            :host([selected]) { outline: 1px solid #e6e6e6; }
            header { display: flex; align-items: center; gap: 4px; height: 19px; padding: 0 9px 1px; background: #237d5c; border-radius: 4px 4px 0 0; white-space: nowrap; }
            header ui-icon { width: 10px; height: 10px; }
            section { padding: 3px 10px 4px; }
        `;
    }
    view() {
        const heading = this.attr('heading');
        return `
            ${heading ? `<header><ui-icon name="down"></ui-icon>${heading}</header>` : ''}
            <section><slot></slot></section>
        `;
    }
}
customElements.define('geo-node', GeoNode);

// A line of a node. The socket sits on the node's edge.
class NodeRow extends UiElement {
    styles() {
        return `
            :host { display: flex; align-items: center; height: 20px; position: relative; white-space: nowrap; }
            :host([side=out]) { justify-content: flex-end; margin-bottom: 4px; }
            .socket { position: absolute; top: 6px; left: -14px; width: 8px; height: 8px; border-radius: 4px; background: var(--socket, #a1a1a1); }
            :host([side=out]) .socket { left: auto; right: -14px; }
            :host([shape=diamond]) .socket { left: -13px; top: 7px; width: 6px; height: 6px; border-radius: 1px; background: #1d1d1d; border: 2px solid var(--socket, #a1a1a1); rotate: 45deg; }
            .num { display: flex; align-items: center; flex: 1; height: 16px; padding: 0 12px 0 15px; background: #545454; border-radius: 2px; }
            .num input { flex: 1; width: 20px; text-align: right; }
            .pick { flex: 1; position: relative; display: flex; }
            select { flex: 1; height: 16px; background: #282828; padding: 0 7px; }
            .pick ui-icon { position: absolute; right: 2px; top: 4px; width: 8px; height: 8px; }
            .check { display: flex; align-items: center; gap: 4px; }
            .check input { width: 12px; height: 12px; }
            .seg { display: flex; flex: 1; }
            .seg button { flex: 1; height: 17px; background: #545454; }
            .seg .on { background: #4772b3; }
            .in { padding: 0 1px; }
        `;
    }
    view() {
        const label = this.attr('label');
        const value = this.attr('value');
        const parts = {
            label: `<span class="in">${label}</span>`,
            number: `<label class="num">${label}<input type="text" value="${value}"></label>`,
            select: `<span class="pick"><select aria-label="模式"><option>${value}</option></select><ui-icon name="down"></ui-icon></span>`,
            check: `<label class="check"><input type="checkbox" checked>${label}</label>`,
            segment: `<span class="seg"><button type="button">${label}</button><button type="button" class="on">${value}</button></span>`
        };
        return `${this.hasAttribute('side') ? '<i class="socket"></i>' : ''}${parts[this.attr('kind', 'label')]}`;
    }
}
customElements.define('node-row', NodeRow);

class AddMenu extends UiElement {
    styles() {
        return `
            :host { display: block; padding: 4px 3px 2px 0; background: #181818; border-radius: 3px; box-shadow: 0 2px 6px rgba(0, 0, 0, .5); }
            .title { height: 15px; line-height: 13px; padding-left: 4px; color: #8c8c8c; }
            button { display: flex; align-items: center; gap: 4px; width: 100%; height: 15px; padding: 0 2px 0 6px; text-align: left; }
            button.hover { background: #404040; color: #fff; }
            .label { flex: 1; }
            .gap { width: 12px; }
            .arrow { width: 8px; height: 8px; color: #999; }
            hr { border: 0; border-top: 1px solid #303030; margin: 2px 4px; }
        `;
    }
    view() {
        const groups = [
            ['属性', '输入', '输出'], ['几何数据'], ['曲线', '实例', '网格', '点', '体积'], ['模拟'],
            ['材质', '纹理', '实用工具'], ['群组', '布局'], ['毛发', '法向']
        ];
        const item = (t) => `<button type="button"${t === '网格' ? ' class="hover"' : ''}><span class="gap"></span><span class="label">${t}</span><ui-icon class="arrow" name="play"></ui-icon></button>`;
        return `
            <div class="title">添加</div><hr>
            <button type="button"><ui-icon name="search"></ui-icon><span class="label">搜索...</span></button><hr>
            ${groups.map((g) => g.map(item).join('')).join('<hr>')}
            <button type="button"><ui-icon name="hero"></ui-icon><span class="label">OCDHERO</span></button>
        `;
    }
}
customElements.define('add-menu', AddMenu);

class NodeSidebar extends UiElement {
    styles() {
        return `
            :host { display: flex; gap: 5px; }
            .panels { width: 183px; display: flex; flex-direction: column; gap: 2px; }
            .usage { background: #383838; margin: -3px -7px -6px; padding-bottom: 6px; }
            .usage > button { display: flex; align-items: center; gap: 4px; width: 100%; height: 19px; padding: 0 10px; background: #3d3d3d; color: #ccc; }
            .usage > button ui-icon { width: 8px; height: 8px; }
            .usage div { padding: 5px 7px 0; }
            .list { flex: 1; height: 63px; background: #2b2b2b; border-radius: 3px; padding: 4px 9px 0 3px; margin-left: 1px; display: flex; flex-direction: column; }
            .list button { display: flex; align-items: center; justify-content: space-between; height: 13px; padding: 0 7px 0 29px; width: 100%; margin-bottom: 4px; }
            .list .on { background: #4772b3; color: #ccc; }
            .list .second { padding: 0 0 0 17px; gap: 6px; justify-content: flex-start; }
            i { width: 6px; height: 6px; border-radius: 3px; background: #2fdca0; }
            .grip { margin: auto auto 2px; }
            .row { display: flex; gap: 8px; }
            .col { display: flex; flex-direction: column; gap: 2px; margin-right: -1px; }
            .hide { margin-top: 4px; }
            .tabs { display: flex; flex-direction: column; gap: 5px; padding: 3px 2px 0 0; }
            .tabs button { writing-mode: vertical-rl; text-orientation: sideways; width: 13px; line-height: 13px; padding: 5px 0; background: #1a1a1a; color: #bbb; border-radius: 0 3px 3px 0; white-space: nowrap; }
            .tabs .on { background: #303030; color: #fff; }
        `;
    }
    view() {
        return `
            <div class="panels">
                <ui-panel heading="群组">
                    <ui-prop label="名称" value="几何节点"></ui-prop>
                    <ui-prop label="描述"></ui-prop>
                    <ui-prop kind="select" label="颜色标签" value="无"></ui-prop>
                    <ui-prop kind="number" label="节点宽度" value="140"></ui-prop>
                    <div class="usage">
                        <button type="button"><ui-icon name="down"></ui-icon>用法</button>
                        <div><ui-prop kind="check" label="修改器" checked></ui-prop></div>
                        <div style="padding-top:1px"><ui-prop kind="check" label="工具"></ui-prop></div>
                    </div>
                </ui-panel>
                <ui-panel heading="群组接口">
                    <div class="row">
                        <div class="list">
                            <button type="button" class="on">几何数据<i></i></button>
                            <button type="button" class="second"><i></i>几何数据</button>
                            <ui-icon class="grip" name="grip"></ui-icon>
                        </div>
                        <div class="col"><ui-button icon="plus"></ui-button><ui-button icon="minus" kind="lit"></ui-button><ui-button label="更多" drop style="margin-top:4px"></ui-button></div>
                    </div>
                    <ui-prop kind="select" label="类型" value="几何数据"></ui-prop>
                    <ui-prop label="描述"></ui-prop>
                    <ui-prop class="hide" kind="check" label="隐藏值"></ui-prop>
                </ui-panel>
            </div>
            <div class="tabs">
                ${['群组', '节点', '工具', '视图', '节点牧人'].map((t, i) => `<button type="button"${i ? '' : ' class="on"'}>${t}</button>`).join('')}
            </div>
        `;
    }
}
customElements.define('node-sidebar', NodeSidebar);

class NodeEditor extends UiElement {
    styles() {
        return `
            :host { display: flex; flex-direction: column; overflow: hidden; border-radius: 4px; background: #1d1d1d; border-top: 1px solid #2c2c2c; --btn: #232323; }
            editor-header { height: 17px; padding: 0 4px 0 7px; }
            .mid { display: flex; gap: 0; padding-right: 16px; }
            .mid input { width: 62px; height: 14px; background: #181818; padding: 0 6px; }
            .mid ui-button:last-child { margin-left: 6px; color: #888; }
            .mode { position: relative; }
            .mode select { width: 51px; height: 14px; padding: 0 5px; background: #282828; }
            .mode ui-icon { position: absolute; right: 2px; top: 3px; width: 8px; height: 8px; }
            .graph { position: relative; flex: 1; display: flex; align-items: flex-start; overflow: hidden; }
            .links { position: absolute; left: 0; top: 0; width: 100%; height: 100%; }
            .crumbs { display: flex; align-items: center; gap: 6px; padding: 10px 0 0; color: #d8d8d8; }
            .crumbs .sep { width: 8px; height: 8px; margin-left: 4px; }
            .crumbs .sep:first-child { margin: 0 1px 0 -2px; }
            node-sidebar { margin: 2px 0 0 auto; position: relative; }
            add-menu { position: absolute; left: 725px; top: 71px; width: 134px; }
            .pointer { position: absolute; left: 822px; top: 222px; width: 10px; height: 15px; }
            .scroll { height: 2px; width: 87%; margin: 0 0 1px 8px; background: #3a3a3a; }
        `;
    }
    view() {
        return `
            <editor-header>
                <ui-button slot="left" icon="geonodes" drop></ui-button>
                <span slot="left" class="mode"><select aria-label="类型"><option>修改器</option></select><ui-icon name="down"></ui-icon></span>
                <ui-menus slot="left" items="视图,选择,添加,节点" style="margin-left:1px"></ui-menus>
                <div slot="center" class="mid">
                    <ui-button icon="nodetree" drop></ui-button>
                    <input type="text" value="几何节点" aria-label="节点树">
                    <ui-button icon="shield" kind="lit" dim></ui-button>
                    <ui-button icon="copy" kind="lit"></ui-button>
                    <ui-button icon="close" kind="lit"></ui-button>
                    <ui-button icon="pin" kind="flat"></ui-button>
                </div>
                <ui-button slot="right" icon="magnet" kind="lit" dim></ui-button>
                <span slot="right" style="display:flex"><ui-button icon="overlay" kind="on"></ui-button><ui-button label="叠加层" drop></ui-button></span>
            </editor-header>
            <div class="graph">
                <svg class="links" fill="none" stroke-width="2">
                    <path d="M549 54C570 59 562 97 577 100" stroke="#2fd59c"/>
                    <path d="M703 56C721 56 728 74 744 100M871 57C930 57 950 18 998 0" stroke="#c4ecdc"/>
                </svg>
                <div class="crumbs">
                    <ui-icon class="sep" name="right"></ui-icon><ui-icon name="object"></ui-icon><span>平面</span>
                    <ui-icon class="sep" name="right"></ui-icon><ui-icon name="geonodes"></ui-icon><span>几何节点</span>
                    <ui-icon class="sep" name="right"></ui-icon><ui-icon name="nodetree"></ui-icon><span>几何节点</span>
                </div>
                <geo-node heading="四边形" style="left:423px;top:22px">
                    <node-row side="out" label="曲线" style="--socket:#2fdca0"></node-row>
                    <node-row kind="select" value="矩形"></node-row>
                    <node-row side="in" kind="number" label="宽度" value="4 m"></node-row>
                    <node-row side="in" kind="number" label="高度" value="2 m"></node-row>
                </geo-node>
                <geo-node heading="圆角曲线" style="left:577px;top:24px">
                    <node-row side="out" label="曲线" style="--socket:#2fdca0"></node-row>
                    <node-row kind="segment" label="贝塞尔" value="多段线"></node-row>
                    <node-row side="in" label="曲线" style="--socket:#2fdca0"></node-row>
                    <node-row side="in" shape="diamond" kind="number" label="数量" value="10" style="--socket:#598c5c"></node-row>
                    <node-row side="in" shape="diamond" kind="number" label="半径" value="1 m"></node-row>
                    <node-row side="in" kind="check" label="限制半径" style="--socket:#cca6d6"></node-row>
                </geo-node>
                <geo-node heading="曲线 转换为 网格" selected style="left:745px;top:26px;height:107px">
                    <node-row side="out" label="网格" style="--socket:#2fdca0"></node-row>
                </geo-node>
                <geo-node style="left:1045px;top:-5px">
                    <node-row side="in" shape="diamond" label="值"></node-row>
                </geo-node>
                <geo-node style="left:1193px;top:-5px;height:10px"></geo-node>
                <node-sidebar></node-sidebar>
                <add-menu></add-menu>
                <svg class="pointer" viewBox="0 0 10 15"><path d="M0 0v13l3-3 2 5 2-1-2-4h5z" fill="#fff"/></svg>
            </div>
            <div class="scroll"></div>
        `;
    }
}
customElements.define('node-editor', NodeEditor);

class StatusBar extends UiElement {
    styles() {
        return `
            :host { display: flex; align-items: center; gap: 4px; height: 17px; padding: 0 8px; background: #181818; color: #8c8c8c; }
            kbd { font: inherit; line-height: 9px; border: 1px solid #8c8c8c; border-radius: 2px; padding: 0 2px; }
            .version { margin-left: auto; color: #b0b0b0; }
        `;
    }
    view() {
        return '<kbd>A</kbd><span>-</span><kbd>Z</kbd><span>搜索</span><span class="version">4.4.0</span>';
    }
}
customElements.define('status-bar', StatusBar);

// Keys, caption and channel mark laid over the recording.
class VideoOverlay extends UiElement {
    styles() {
        return `
            :host { position: absolute; inset: 0; pointer-events: none; }
            .keys { position: absolute; left: 48px; bottom: 77px; width: 225px; height: 102px; padding: 20px 54px 14px 112px; background: #4a4a4a; border-radius: 12px; }
            .key { height: 68px; padding: 5px 18px 0 0; border-radius: 6px; background: #474747; color: #575757; text-align: right; font-size: 12px; line-height: 21px; }
            .caption { position: absolute; left: 0; right: 0; bottom: 50px; margin: 0; text-align: center; color: #fff; font: 500 39px/56px "Noto Sans CJK SC", sans-serif; -webkit-text-stroke: 6px #0a0a0a; paint-order: stroke fill; }
            .mark { position: absolute; left: 11px; bottom: 7px; display: flex; align-items: center; gap: 11px; color: #a8a8a8; opacity: .6; font: 700 36px/48px "Open Sans", sans-serif; }
            .mark svg { width: 39px; height: 39px; }
        `;
    }
    view() {
        return `
            <div class="keys"><div class="key">⇧<br>shift</div></div>
            <p class="caption">你找到曲线基本体</p>
            <div class="mark">
                <svg viewBox="0 0 39 39"><path fill-rule="evenodd" d="M6 0h27a6 6 0 0 1 6 6v27a6 6 0 0 1-6 6H6a6 6 0 0 1-6-6V6a6 6 0 0 1 6-6zM17 4c-5 0-5 12 0 14 5-1 7-13 0-14zM9 20c-4 1-3 6 0 5-3 3 0 10 5 8 5 0 8-12 3-14-3-1-6 0-8 1zM24 14c-5 3-4 11-3 16 3-7 13-9 15-16-2-4-8-3-12 0z" fill="#a8a8a8"/></svg>
                <span>tafe.cc</span>
            </div>
        `;
    }
}
customElements.define('video-overlay', VideoOverlay);

class BlenderApp extends UiElement {
    styles() {
        return `
            :host { box-sizing: border-box; display: flex; flex-direction: column; position: relative; min-height: 100vh; padding-bottom: 30px; overflow: hidden; }
            .work { flex: 1; display: grid; grid-template-columns: minmax(0, 1fr) 332px; gap: 3px; padding-bottom: 2px; background: #141414; }
            .col { display: grid; gap: 3px; min-width: 0; }
            .main { grid-template-rows: minmax(0, 518fr) minmax(0, 472fr); }
            .props { grid-template-rows: minmax(0, 317fr) minmax(0, 673fr); }
        `;
    }
    view() {
        return `
            <title-bar></title-bar>
            <top-bar></top-bar>
            <div class="work">
                <div class="col main"><view-3d></view-3d><node-editor></node-editor></div>
                <div class="col props"><outliner-editor></outliner-editor><properties-editor></properties-editor></div>
            </div>
            <status-bar></status-bar>
            <video-overlay></video-overlay>
        `;
    }
}
customElements.define('blender-app', BlenderApp);
</script>
</body>
</html>
